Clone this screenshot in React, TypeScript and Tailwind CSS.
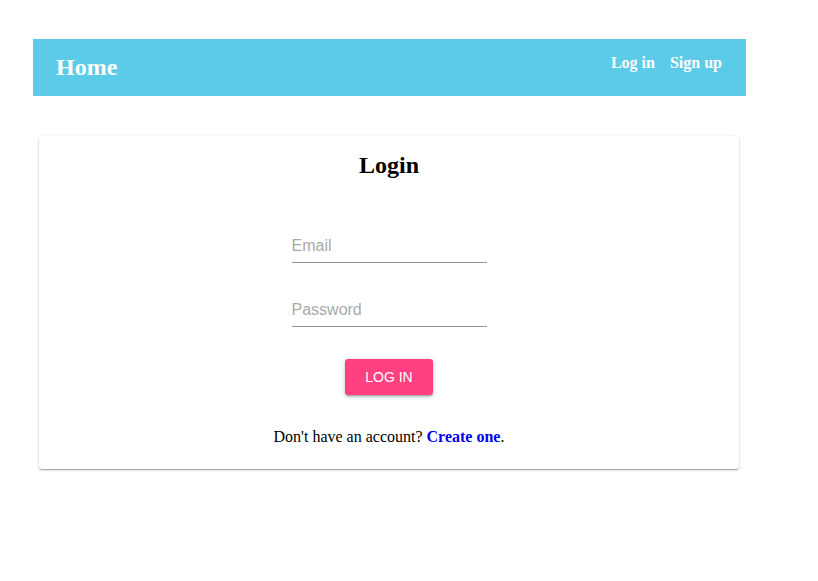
export default function App() {
  const serif = { fontFamily: '"Liberation Serif", "Times New Roman", serif' };
  const sans = { fontFamily: '"Liberation Sans", Arial, sans-serif' };
  return (
    <div className="w-[818px] h-[581px] bg-white" style={serif}>
      <div className="pt-[39px] pl-[33px] w-[746px]">
        <nav className="h-[57px] bg-[#5ccbe7] flex items-center justify-between pl-[23px] pr-[24px]">
          <span className="text-[24px] font-bold text-white leading-none -mt-[2px]">Home</span>
          <div className="flex gap-[15px] text-[16px] font-bold text-white leading-none -mt-[9px]">
            <span>Log in</span>
            <span>Sign up</span>
          </div>
        </nav>
        <div className="mt-[40px] ml-[6px] mr-[7px] bg-white rounded-[3px] shadow-[0_1px_3px_rgba(0,0,0,0.2),0_1px_1px_rgba(0,0,0,0.14),0_2px_1px_-1px_rgba(0,0,0,0.12)] h-[333px] flex flex-col items-center">
          <h2 className="text-[24px] font-bold leading-none mt-[17px] text-black">Login</h2>
          <div className="mt-[58px] w-[195px] flex flex-col" style={sans}>
            <div className="h-[28px] border-b border-[#949494] text-[16px] text-[#a9a9a9] leading-none pt-[3px]">Email</div>
            <div className="h-[28px] mt-[36px] border-b border-[#949494] text-[16px] text-[#a9a9a9] leading-none pt-[3px]">Password</div>
          </div>
          <button
            className="mt-[32px] w-[88px] h-[36px] bg-[#ff4081] text-white text-[14px] rounded-[3px] shadow-[0_1px_5px_rgba(0,0,0,0.2),0_2px_2px_rgba(0,0,0,0.14),0_3px_1px_-2px_rgba(0,0,0,0.12)]"
            style={sans}
          >
            LOG IN
          </button>
          <p className="mt-[34px] text-[16px] text-black leading-none">
            Don't have an account? <a className="font-bold text-[#0000ee]">Create one</a>.
          </p>
        </div>
      </div>
    </div>
  );
}
